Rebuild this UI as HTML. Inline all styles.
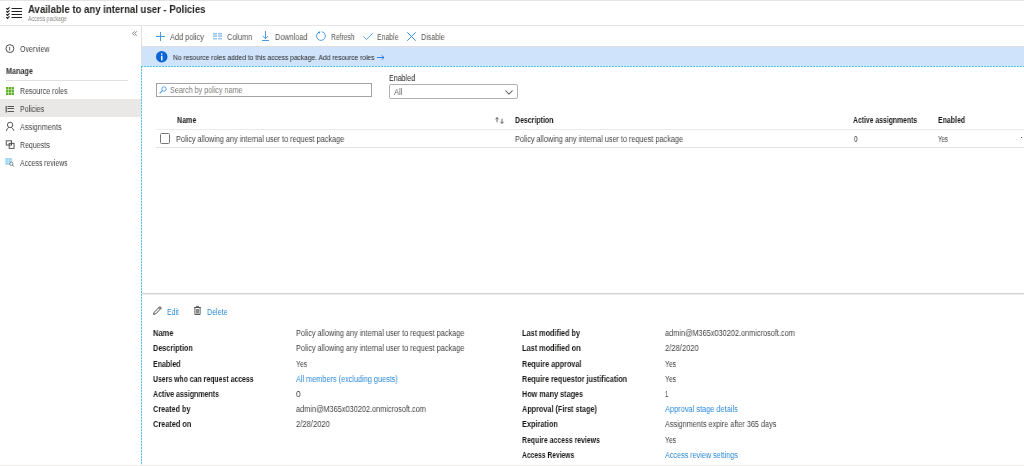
<!DOCTYPE html>
<html><head><meta charset="utf-8">
<style>
*{margin:0;padding:0;box-sizing:border-box}
html,body{width:1024px;height:466px;overflow:hidden;background:#fff}
body{position:relative;font-family:"Liberation Sans",sans-serif;color:#444342;font-size:8px}
.t{position:absolute;white-space:nowrap;line-height:1;transform-origin:0 0;will-change:transform}
.b{font-weight:bold;color:#1b1a19}
.l{color:#2b88d8}
.ic{position:absolute;overflow:visible}
.bx{position:absolute}
</style></head><body>
<div class="bx" style="left:0px;top:0px;width:1024px;height:1px;background:#e4e4e4"></div>
<svg class="ic" style="left:6px;top:7px" width="16" height="13" viewBox="0 0 16 13">
<g fill="none" stroke="#222" stroke-width="1.1">
<path d="M5.5 1.5H16M5.5 4.5H16M5.5 7.5H16M5.5 10.5H16"/>
<path d="M0.3 1.2l1.2 1.2 2-2M0.3 4.2l1.2 1.2 2-2M0.3 7.2l1.2 1.2 2-2M0.3 10.2l1.2 1.2 2-2"/>
</g></svg>
<div class="t b" style="left:28.10px;top:5px;font-size:10.4px;transform:scaleX(0.9221);color:#252423">Available to any internal user - Policies</div>
<div class="t r" style="left:27.70px;top:16px;font-size:6.3px;transform:scaleX(0.8479);color:#8a8886">Access package</div>
<div class="bx" style="left:0px;top:25px;width:1024px;height:1px;background:#e4e4e4"></div>
<div class="bx" style="left:141px;top:26px;width:1px;height:40px;background:#e1dfdd"></div>
<svg class="ic" style="left:132px;top:31px" width="5" height="5" viewBox="0 0 5 5"><path d="M2.6 0.3L0.4 2.5L2.6 4.7M4.8 0.3L2.6 2.5L4.8 4.7" fill="none" stroke="#666" stroke-width="0.8"/></svg>
<svg class="ic" style="left:5px;top:44px" width="10" height="10" viewBox="0 0 10 10"><circle cx="4.9" cy="4.6" r="3.95" fill="none" stroke="#444" stroke-width="0.95"/><path d="M4.6 2.8V6.6" stroke="#555" stroke-width="0.9"/></svg>
<div class="t r" style="left:19.80px;top:45px;font-size:8.5px;transform:scaleX(0.8351);">Overview</div>
<div class="t b" style="left:5.90px;top:67px;font-size:8.5px;transform:scaleX(0.8490);color:#323130">Manage</div>
<div class="bx" style="left:6px;top:80px;width:122px;height:1px;background:#e1dfdd"></div>
<svg class="ic" style="left:6px;top:86.5px" width="8" height="8" viewBox="0 0 8 8"><rect width="8" height="8" fill="#62b02e"/><path d="M0 2.5H8M0 5.5H8M2.5 0V8M5.5 0V8" stroke="#c8e6b0" stroke-width="0.7"/></svg>
<div class="t r" style="left:19.90px;top:87px;font-size:8.5px;transform:scaleX(0.8293);">Resource roles</div>
<div class="bx" style="left:0px;top:99px;width:141px;height:18px;background:#e9e8e7"></div>
<svg class="ic" style="left:5px;top:104.5px" width="10" height="8" viewBox="0 0 10 8"><path d="M2.5 1.5H9M2.5 3.5H9M2.5 6.5H9" stroke="#555" stroke-width="1"/><path d="M1.2 1V7.5" stroke="#555" stroke-width="1.2"/></svg>
<div class="t r" style="left:19.90px;top:105px;font-size:8.5px;transform:scaleX(0.8230);">Policies</div>
<svg class="ic" style="left:5px;top:121.8px" width="10" height="10" viewBox="0 0 10 10"><circle cx="5.1" cy="2.9" r="2.7" fill="none" stroke="#444" stroke-width="0.9"/><path d="M1.3 8.9C1.8 7.3 2.6 6.1 3.8 5.4M8.9 8.9C8.4 7.3 7.6 6.1 6.4 5.4" fill="none" stroke="#444" stroke-width="0.9"/></svg>
<div class="t r" style="left:19.90px;top:123px;font-size:8.5px;transform:scaleX(0.8552);">Assignments</div>
<svg class="ic" style="left:4.5px;top:140px" width="10" height="10" viewBox="0 0 10 10"><rect x="1.25" y="0.85" width="5.3" height="4.2" fill="none" stroke="#444" stroke-width="0.9"/><rect x="4.15" y="3.35" width="4.9" height="5.0" fill="none" stroke="#444" stroke-width="0.9"/></svg>
<div class="t r" style="left:19.90px;top:141px;font-size:8.5px;transform:scaleX(0.8217);">Requests</div>
<svg class="ic" style="left:5px;top:158px" width="10" height="10" viewBox="0 0 10 10"><rect x="0.3" y="0" width="6.6" height="6.8" fill="#9fd8f4"/><path d="M0.3 2.3H6.9M0.3 4.6H6.9M3.6 0V6.8" stroke="#cdeaf8" stroke-width="0.5"/><circle cx="6.3" cy="5.75" r="1.65" fill="#e8f4fb" stroke="#666" stroke-width="0.7"/><path d="M7.5 7L8.9 8.6" stroke="#666" stroke-width="0.8"/></svg>
<div class="t r" style="left:19.90px;top:159px;font-size:8.5px;transform:scaleX(0.8128);">Access reviews</div>
<div class="bx" style="left:141px;top:66px;width:1px;height:400px;background:repeating-linear-gradient(to bottom,#55c6f0 0 2px,#c8ecfa 2px 3px)"></div>
<div class="bx" style="left:141px;top:66px;width:883px;height:1px;background:repeating-linear-gradient(to right,#55c6f0 0 2px,#c8ecfa 2px 3px)"></div>
<svg class="ic" style="left:156px;top:32px" width="9" height="9" viewBox="0 0 9 9"><path d="M4.5 0V9M0 4.5H9" stroke="#3a8fdc" stroke-width="0.9"/></svg>
<div class="t r" style="left:169.70px;top:33px;font-size:8.5px;transform:scaleX(0.8632);color:#575553">Add policy</div>
<svg class="ic" style="left:213px;top:33px" width="9" height="6.5" viewBox="0 0 9 6.5"><rect x="0" y="0" width="4" height="3.8" fill="#c6e0f7"/><rect x="5" y="0" width="4" height="3.8" fill="#c6e0f7"/><path d="M0 0.6H4M5 0.6H9M0 3.3H4M5 3.3H9" stroke="#86bdee" stroke-width="0.9"/><path d="M0 5.8H4M5 5.8H9" stroke="#5ca6e8" stroke-width="0.9"/></svg>
<div class="t r" style="left:226.80px;top:33px;font-size:8.5px;transform:scaleX(0.8626);color:#575553">Column</div>
<svg class="ic" style="left:262px;top:31px" width="7" height="10" viewBox="0 0 7 10"><path d="M3.5 0V7.5M0.8 5l2.7 2.7L6.2 5M0 9.5H7" fill="none" stroke="#3a8fdc" stroke-width="0.9"/></svg>
<div class="t r" style="left:274.90px;top:33px;font-size:8.5px;transform:scaleX(0.8615);color:#575553">Download</div>
<svg class="ic" style="left:316px;top:31px" width="10" height="10" viewBox="0 0 10 10"><path d="M5.92 0.7A4.4 4.4 0 1 1 3.35 0.92" fill="none" stroke="#3a8fdc" stroke-width="0.9"/><path d="M4.6 0.8L2.3 0.7L3.0 3.0Z" fill="#2f86dc"/></svg>
<div class="t r" style="left:330.70px;top:33px;font-size:8.5px;transform:scaleX(0.7891);color:#575553">Refresh</div>
<svg class="ic" style="left:363px;top:33px" width="10" height="7" viewBox="0 0 10 7"><path d="M0.4 3.4L3.4 6.4L9.6 0.4" fill="none" stroke="#3a8fdc" stroke-width="0.9"/></svg>
<div class="t r" style="left:377.00px;top:33px;font-size:8.5px;transform:scaleX(0.8153);color:#575553">Enable</div>
<svg class="ic" style="left:407px;top:32px" width="9" height="9" viewBox="0 0 9 9"><path d="M0.3 0.3L8.7 8.7M8.7 0.3L0.3 8.7" stroke="#3a8fdc" stroke-width="1"/></svg>
<div class="t r" style="left:421.10px;top:33px;font-size:8.5px;transform:scaleX(0.8386);color:#575553">Disable</div>
<div class="bx" style="left:142px;top:46px;width:882px;height:1px;background:#dedede"></div>
<div class="bx" style="left:142px;top:47px;width:882px;height:19px;background:#cfe4fb"></div>
<svg class="ic" style="left:156px;top:51px" width="11.5" height="11.5" viewBox="0 0 11 11"><circle cx="5.5" cy="5.5" r="5.5" fill="#0b63d8"/><path d="M5.5 4.6V9" stroke="#fff" stroke-width="1.4"/><circle cx="5.5" cy="2.9" r="0.8" fill="#fff"/></svg>
<div class="t r" style="left:172.70px;top:54px;font-size:7.5px;transform:scaleX(0.8885);color:#252423">No resource roles added to this access package. Add resource roles</div>
<svg class="ic" style="left:376.5px;top:54.5px" width="7.5" height="5" viewBox="0 0 7.5 5"><path d="M0 2.5H7M4.6 0.2L7 2.5L4.6 4.8" fill="none" stroke="#0b63d8" stroke-width="0.8"/></svg>
<div class="bx" style="left:156px;top:83px;width:216px;height:14px;border:1px solid #a6a4a2"></div>
<svg class="ic" style="left:159px;top:86px" width="8" height="8" viewBox="0 0 8 8"><circle cx="5" cy="3" r="2.2" fill="none" stroke="#4a9de6" stroke-width="0.9"/><path d="M3.4 4.6L0.6 7.4" stroke="#4a9de6" stroke-width="1.1"/></svg>
<div class="t r" style="left:170.20px;top:86px;font-size:8.5px;transform:scaleX(0.8428);color:#7a7876">Search by policy name</div>
<div class="t r" style="left:389.10px;top:74px;font-size:8.5px;transform:scaleX(0.8358);color:#252423">Enabled</div>
<div class="bx" style="left:389px;top:84px;width:129px;height:15px;border:1px solid #b3b0ad;border-radius:2px"></div>
<div class="t r" style="left:393.90px;top:88px;font-size:8.5px;transform:scaleX(0.8998);color:#605e5c">All</div>
<svg class="ic" style="left:505px;top:89.5px" width="8" height="5" viewBox="0 0 8 5"><path d="M0.4 0.5L4 4.1L7.6 0.5" fill="none" stroke="#555" stroke-width="1.05"/></svg>
<div class="t b" style="left:177.00px;top:116px;font-size:8.5px;transform:scaleX(0.8325);">Name</div>
<svg class="ic" style="left:495px;top:117px" width="10" height="7" viewBox="0 0 10 7"><path d="M2 0.6V5.2M0.4 2.3L2 0.6L3.6 2.3M7 1.8V6.4M5.4 4.7L7 6.4L8.6 4.7" fill="none" stroke="#555" stroke-width="0.9"/></svg>
<div class="t b" style="left:514.90px;top:116px;font-size:8.5px;transform:scaleX(0.8225);">Description</div>
<div class="t b" style="left:853.40px;top:116px;font-size:8.5px;transform:scaleX(0.8039);">Active assignments</div>
<div class="t b" style="left:938.00px;top:116px;font-size:8.5px;transform:scaleX(0.8214);">Enabled</div>
<div class="bx" style="left:156px;top:129px;width:868px;height:1px;background:#ebebeb"></div>
<div class="bx" style="left:160px;top:133px;width:10px;height:11px;border:1px solid #7a7876;border-radius:1.5px"></div>
<div class="t r" style="left:176.40px;top:135px;font-size:8.5px;transform:scaleX(0.8597);">Policy allowing any internal user to request package</div>
<div class="t r" style="left:514.70px;top:135px;font-size:8.5px;transform:scaleX(0.8587);">Policy allowing any internal user to request package</div>
<div class="t r" style="left:853.90px;top:135px;font-size:8.5px;transform:scaleX(0.7200);">0</div>
<div class="t r" style="left:938.30px;top:135px;font-size:8.5px;transform:scaleX(0.7271);">Yes</div>
<div class="bx" style="left:1021px;top:137px;width:1px;height:1px;background:#555"></div>
<div class="bx" style="left:156px;top:147px;width:868px;height:1px;background:#e3e3e3"></div>
<div class="bx" style="left:142px;top:293px;width:882px;height:1px;background:#d4d4d4"></div>
<div class="bx" style="left:142px;top:294px;width:882px;height:1px;background:#ebebeb"></div>
<svg class="ic" style="left:153px;top:305.5px" width="9" height="9" viewBox="0 0 9 9"><path d="M0.6 8.4L1.1 6.4L6.9 0.6L8.4 2.1L2.6 7.9Z M5.9 1.6L7.4 3.1" fill="none" stroke="#333" stroke-width="0.9"/></svg>
<div class="t l" style="left:167.30px;top:308px;font-size:8.5px;transform:scaleX(0.8047);">Edit</div>
<svg class="ic" style="left:194px;top:305.5px" width="7" height="9" viewBox="0 0 7 9"><rect x="2" y="3" width="3" height="4.6" fill="#888"/><path d="M0.2 1.5H6.8M2.4 1.5V0.4H4.6V1.5M0.9 1.5V8.5H6.1V1.5" fill="none" stroke="#333" stroke-width="0.8"/></svg>
<div class="t l" style="left:207.00px;top:308px;font-size:8.5px;transform:scaleX(0.8413);">Delete</div>
<div class="t b" style="left:153.40px;top:329px;font-size:8.5px;transform:scaleX(0.8795);">Name</div>
<div class="t r" style="left:295.90px;top:329px;font-size:8.5px;transform:scaleX(0.8602);">Policy allowing any internal user to request package</div>
<div class="t b" style="left:153.40px;top:344px;font-size:8.5px;transform:scaleX(0.8526);">Description</div>
<div class="t r" style="left:295.90px;top:344px;font-size:8.5px;transform:scaleX(0.8602);">Policy allowing any internal user to request package</div>
<div class="t b" style="left:153.40px;top:360px;font-size:8.5px;transform:scaleX(0.8336);">Enabled</div>
<div class="t r" style="left:295.90px;top:360px;font-size:8.5px;transform:scaleX(0.8152);">Yes</div>
<div class="t b" style="left:153.40px;top:375px;font-size:8.5px;transform:scaleX(0.8125);">Users who can request access</div>
<div class="t l" style="left:295.90px;top:375px;font-size:8.5px;transform:scaleX(0.8582);">All members (excluding guests)</div>
<div class="t b" style="left:153.40px;top:390px;font-size:8.5px;transform:scaleX(0.8276);">Active assignments</div>
<div class="t r" style="left:295.90px;top:390px;font-size:8.5px;transform:scaleX(0.9000);">0</div>
<div class="t b" style="left:153.40px;top:405px;font-size:8.5px;transform:scaleX(0.8506);">Created by</div>
<div class="t r" style="left:295.90px;top:405px;font-size:8.5px;transform:scaleX(0.8637);">admin@M365x030202.onmicrosoft.com</div>
<div class="t b" style="left:153.40px;top:420px;font-size:8.5px;transform:scaleX(0.8619);">Created on</div>
<div class="t r" style="left:295.90px;top:420px;font-size:8.5px;transform:scaleX(0.8979);">2/28/2020</div>
<div class="t b" style="left:522.00px;top:329px;font-size:8.5px;transform:scaleX(0.8598);">Last modified by</div>
<div class="t r" style="left:664.50px;top:329px;font-size:8.5px;transform:scaleX(0.8630);">admin@M365x030202.onmicrosoft.com</div>
<div class="t b" style="left:522.00px;top:344px;font-size:8.5px;transform:scaleX(0.8627);">Last modified on</div>
<div class="t r" style="left:664.50px;top:344px;font-size:8.5px;transform:scaleX(0.8953);">2/28/2020</div>
<div class="t b" style="left:522.00px;top:360px;font-size:8.5px;transform:scaleX(0.8570);">Require approval</div>
<div class="t r" style="left:664.50px;top:360px;font-size:8.5px;transform:scaleX(0.8078);">Yes</div>
<div class="t b" style="left:522.00px;top:375px;font-size:8.5px;transform:scaleX(0.8523);">Require requestor justification</div>
<div class="t r" style="left:664.50px;top:375px;font-size:8.5px;transform:scaleX(0.8078);">Yes</div>
<div class="t b" style="left:522.00px;top:390px;font-size:8.5px;transform:scaleX(0.8505);">How many stages</div>
<div class="t r" style="left:664.50px;top:390px;font-size:8.5px;transform:scaleX(0.7000);">1</div>
<div class="t b" style="left:522.00px;top:405px;font-size:8.5px;transform:scaleX(0.8532);">Approval (First stage)</div>
<div class="t l" style="left:664.50px;top:405px;font-size:8.5px;transform:scaleX(0.8707);">Approval stage details</div>
<div class="t b" style="left:522.00px;top:420px;font-size:8.5px;transform:scaleX(0.8629);">Expiration</div>
<div class="t r" style="left:664.50px;top:420px;font-size:8.5px;transform:scaleX(0.8529);">Assignments expire after 365 days</div>
<div class="t b" style="left:522.00px;top:436px;font-size:8.5px;transform:scaleX(0.8119);">Require access reviews</div>
<div class="t r" style="left:664.50px;top:436px;font-size:8.5px;transform:scaleX(0.8078);">Yes</div>
<div class="t b" style="left:522.00px;top:451px;font-size:8.5px;transform:scaleX(0.7903);">Access Reviews</div>
<div class="t l" style="left:664.50px;top:451px;font-size:8.5px;transform:scaleX(0.8469);">Access review settings</div>
<div class="bx" style="left:0px;top:465px;width:1024px;height:1px;background:#edebe9"></div>
</body></html>
